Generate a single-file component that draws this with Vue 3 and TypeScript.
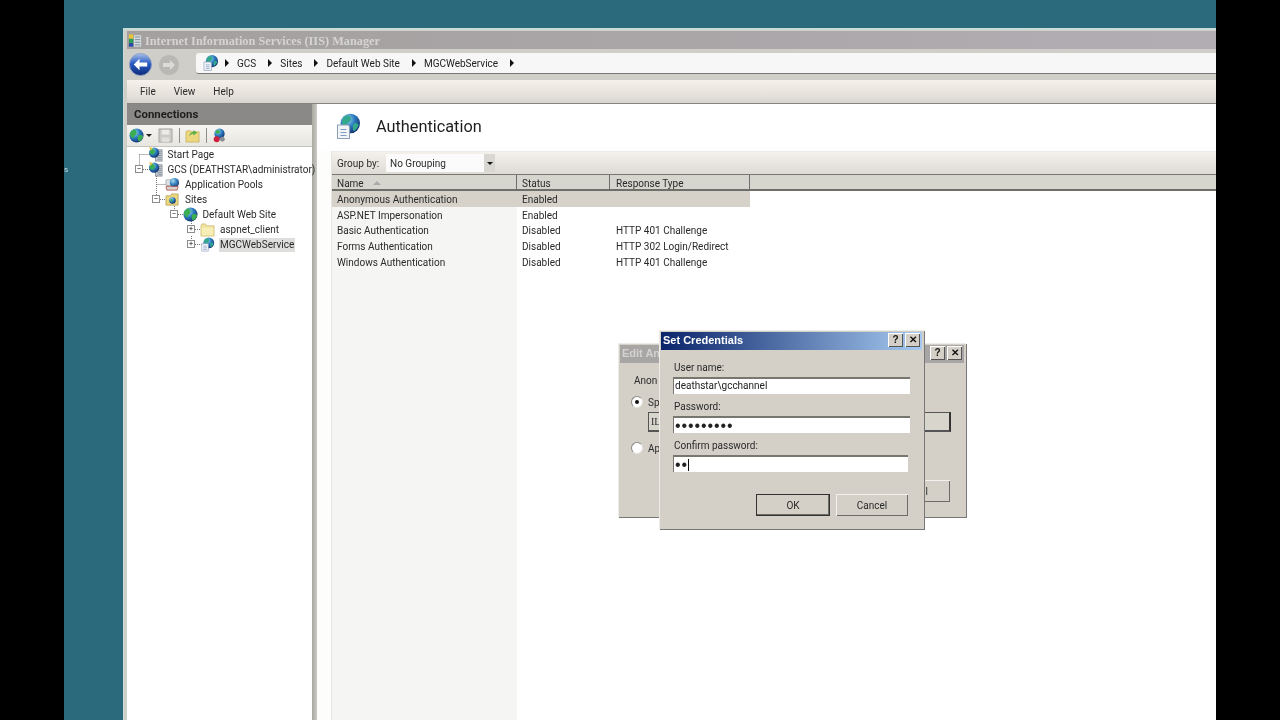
<script setup lang="ts">
interface TreeRow {
  label: string
  level: number
  icon: string
  selected?: boolean
}

const crumbs = ['GCS', 'Sites', 'Default Web Site', 'MGCWebService']

const treeRows: TreeRow[] = [
  { label: 'Start Page', level: 0, icon: 'start' },
  { label: 'GCS (DEATHSTAR\\administrator)', level: 0, icon: 'start' },
  { label: 'Application Pools', level: 1, icon: 'pools' },
  { label: 'Sites', level: 1, icon: 'sites' },
  { label: 'Default Web Site', level: 2, icon: 'globe' },
  { label: 'aspnet_client', level: 3, icon: 'folder' },
  { label: 'MGCWebService', level: 3, icon: 'app', selected: true },
]

// expander boxes of the tree, x/y inside the tree overlay
const expanders = [
  { x: 12, y: 22, plus: false },
  { x: 29, y: 52, plus: false },
  { x: 47, y: 67, plus: false },
  { x: 64, y: 82, plus: true },
  { x: 64, y: 97, plus: true },
]

const authRows = [
  { name: 'Anonymous Authentication', status: 'Enabled', type: '', selected: true },
  { name: 'ASP.NET Impersonation', status: 'Enabled', type: '' },
  { name: 'Basic Authentication', status: 'Disabled', type: 'HTTP 401 Challenge' },
  { name: 'Forms Authentication', status: 'Disabled', type: 'HTTP 302 Login/Redirect' },
  { name: 'Windows Authentication', status: 'Disabled', type: 'HTTP 401 Challenge' },
]
</script>

<template>
  <div class="screen">
    <svg width="0" height="0" class="defs">
      <defs>
        <radialGradient id="gBlue" cx="35%" cy="30%" r="75%">
          <stop offset="0" stop-color="#a6e0f0" />
          <stop offset="0.5" stop-color="#2b7cc0" />
          <stop offset="1" stop-color="#12306e" />
        </radialGradient>
        <linearGradient id="gBack" x1="0" y1="0" x2="0" y2="1">
          <stop offset="0" stop-color="#a9c0ea" />
          <stop offset="0.45" stop-color="#2b5cc4" />
          <stop offset="1" stop-color="#0c2a78" />
        </linearGradient>
        <symbol id="globe" viewBox="0 0 16 16">
          <circle cx="8" cy="8" r="7.5" fill="url(#gBlue)" />
          <path d="M4 2c2-1 4 0 4 3S6 7 5 10 1 8 1 6s2-3 3-4zM10 8c2-1 5 0 5 1s-2 5-4 5-2-5-1-6z" fill="#3cae52" />
        </symbol>
        <symbol id="page-globe" viewBox="0 0 16 18">
          <circle cx="9.5" cy="7" r="6.5" fill="url(#gBlue)" />
          <path d="M6 2c2-1 4 0 4 2s-2 2-3 4-3 0-3-2 1-3 2-4zM12 7c1-1 3 0 3 1s-2 4-3 4-1-4 0-5z" fill="#34a88c" />
          <path d="M1 8h7l1 1v8H1z" fill="#f2f4f8" stroke="#8ea0b8" stroke-width=".7" />
          <path d="M3 11h4M3 13h4M3 15h4" stroke="#7f9cc4" stroke-width=".8" />
        </symbol>
        <symbol id="start" viewBox="0 0 16 16">
          <rect x="8" y="3" width="7" height="12" fill="#c8ccd4" stroke="#6d7480" stroke-width=".7" />
          <path d="M10 5h4M10 7h4M10 9h4M10 11h4M10 13h4" stroke="#70808f" stroke-width=".8" />
          <circle cx="6.5" cy="6" r="5.5" fill="url(#gBlue)" />
          <path d="M4 2c2 0 4 1 3 4s-4 2-5 1 1-5 2-5z" fill="#3cae52" />
          <path d="M1 0l4 1-2 3z" fill="#e8c43c" />
        </symbol>
        <symbol id="pools" viewBox="0 0 16 16">
          <rect x="1" y="3" width="13" height="6" rx="1" fill="#dfe3e6" stroke="#8f969c" stroke-width=".7" />
          <circle cx="10" cy="6" r="5" fill="url(#gBlue)" opacity=".9" />
          <path d="M1 10h13l-1 4H2z" fill="#d8d3cb" stroke="#a33" stroke-width=".7" />
        </symbol>
        <symbol id="sites" viewBox="0 0 16 16">
          <path d="M1 4h5l1-2h7v12H1z" fill="#ecd77e" stroke="#a99546" stroke-width=".7" />
          <circle cx="8" cy="9" r="3.5" fill="url(#gBlue)" />
          <path d="M6 8c1-1 2 0 2 1s-1 2-2 1z" fill="#3cae52" />
        </symbol>
        <symbol id="folder" viewBox="0 0 16 16">
          <path d="M1 4l1-2h4l1 2h8v11H1z" fill="#f1e39f" stroke="#c8b467" stroke-width=".7" />
          <path d="M2 6h12v8H2z" fill="#f7eeb8" />
        </symbol>
        <symbol id="save" viewBox="0 0 16 16">
          <path d="M1 1h14v14H1z" fill="#cdcbc8" stroke="#a8a6a3" />
          <path d="M4 2h8v5H4z" fill="#ecebe8" />
          <path d="M4 10h8v5H4z" fill="#e0dfdc" />
        </symbol>
        <symbol id="up" viewBox="0 0 16 16">
          <path d="M1 4l1-1h4l1 1h8v11H1z" fill="#ecd77e" stroke="#bfa956" stroke-width=".7" />
          <path d="M4 9c1-3 3-5 5-5V2l4 3-4 3V6c-2 0-3 1-5 3z" fill="#5db046" />
        </symbol>
        <symbol id="connect" viewBox="0 0 16 16">
          <circle cx="8" cy="6" r="5.5" fill="url(#gBlue)" />
          <path d="M6 2c2 0 3 1 2 3S5 6 4 5s1-3 2-3z" fill="#3cae52" />
          <circle cx="5" cy="12" r="3.2" fill="#cc2440" />
          <circle cx="11" cy="12" r="2.6" fill="#8a8f96" />
        </symbol>
      </defs>
    </svg>

    <div class="desktop">
      <span class="speck">s</span>

      <div class="window">
        <div class="titlebar">
          <svg class="title-icon" viewBox="0 0 16 16">
            <path d="M1 1h5v5H1z" fill="#e8c43c" />
            <path d="M1 6h5v5H1z" fill="#2c9c5a" />
            <path d="M1 11h5v4H1z" fill="#2748a8" />
            <path d="M7 2h8v13H7z" fill="#d8dde2" />
            <path d="M8 4h6M8 7h6M8 10h6M8 13h6" stroke="#70808f" />
          </svg>
          <span>Internet Information Services (IIS) Manager</span>
        </div>

        <div class="addressrow">
          <div class="nav-buttons">
            <svg class="nav-back" viewBox="0 0 24 24">
              <circle cx="12" cy="12" r="11.5" fill="url(#gBack)" stroke="#8f9fc4" />
              <path d="M5 12l6-6v4h8v4h-8v4z" fill="#fff" />
            </svg>
            <svg class="nav-forward" viewBox="0 0 22 22">
              <circle cx="11" cy="11" r="10.5" fill="#b9b8b4" stroke="#cfcec9" />
              <path d="M17 11l-5-5v3H5v4h7v3z" fill="#dcdbd7" />
            </svg>
          </div>
          <div class="addressbox">
            <svg class="addr-icon"><use href="#page-globe" /></svg>
            <i class="crumb-arrow"></i>
            <template v-for="c in crumbs" :key="c">
              <span class="crumb">{{ c }}</span>
              <i class="crumb-arrow"></i>
            </template>
          </div>
        </div>

        <div class="menubar">
          <span>File</span>
          <span>View</span>
          <span>Help</span>
        </div>

        <div class="workspace">
          <aside class="connections">
            <div class="conn-head">Connections</div>
            <div class="conn-tools">
              <svg class="ti"><use href="#globe" /></svg>
              <i class="tool-drop"></i>
              <svg class="ti save"><use href="#save" /></svg>
              <i class="tool-sep"></i>
              <svg class="ti"><use href="#up" /></svg>
              <i class="tool-sep"></i>
              <svg class="ti"><use href="#connect" /></svg>
            </div>
            <div class="tree">
              <svg class="tree-lines" width="186" height="130">
                <path
                  d="M12.5 9.5v11M12.5 9.5h11M16 24.5h7M29.5 31v19M29.5 39.5h11M33 54.5h7M47.5 61v4M51 69.5h7M64.5 76v4M68 84.5h7M64.5 91v4M68 99.5h7"
                  stroke="#777"
                  stroke-dasharray="1 1"
                  fill="none"
                />
              </svg>
              <span
                v-for="e in expanders"
                :key="e.y"
                class="expander"
                :style="{ left: e.x - 4 + 'px', top: e.y - 4 + 'px' }"
              >{{ e.plus ? '+' : '−' }}</span>
              <div v-for="r in treeRows" :key="r.label" class="tree-row" :style="{ paddingLeft: r.level * 17.5 + 20.5 + 'px' }">
                <svg class="tree-icon"><use :href="r.icon === 'app' ? '#page-globe' : '#' + r.icon" /></svg>
                <span class="tree-label" :class="{ selected: r.selected }">{{ r.label }}</span>
              </div>
            </div>
          </aside>

          <div class="splitter"></div>

          <main class="content">
            <div class="content-head">
              <svg class="head-icon"><use href="#page-globe" /></svg>
              <h1>Authentication</h1>
            </div>
            <div class="content-body">
              <div class="groupbar">
                <span class="group-label">Group by:</span>
                <div class="combo">
                  <span>No Grouping</span>
                  <i class="combo-btn"></i>
                </div>
              </div>
              <div class="columns">
                <div class="col col-name">Name <i class="sort-arrow"></i></div>
                <div class="col col-status">Status</div>
                <div class="col col-type">Response Type</div>
              </div>
              <div class="list">
                <div class="name-tint"></div>
                <div v-for="a in authRows" :key="a.name" class="list-row" :class="{ selected: a.selected }">
                  <span class="col-name">{{ a.name }}</span>
                  <span class="col-status">{{ a.status }}</span>
                  <span class="col-type">{{ a.type }}</span>
                </div>
              </div>
            </div>
          </main>
        </div>
      </div>

      <!-- only the parts of this dialog that stick out from under Set Credentials carry text -->
      <div class="dialog dialog-back">
        <div class="dlg-title back-title">
          <span>Edit An</span>
          <div class="dlg-btns">
            <b>?</b>
            <b>✕</b>
          </div>
        </div>
        <div class="back-body">
          <p class="anon">Anon</p>
          <label class="radio-line"><i class="radio on"></i>Sp</label>
          <div class="back-field">
            <span class="iusr">IL</span>
          </div>
          <label class="radio-line second"><i class="radio"></i>Ap</label>
          <div class="back-actions"><span class="win-btn back-cancel">l</span></div>
        </div>
      </div>

      <div class="dialog dialog-front">
        <div class="dlg-title front-title">
          <span>Set Credentials</span>
          <div class="dlg-btns">
            <b>?</b>
            <b>✕</b>
          </div>
        </div>
        <div class="front-body">
          <label>User name:</label>
          <div class="field">deathstar\gcchannel</div>
          <label>Password:</label>
          <div class="field dots">•••••••••</div>
          <label>Confirm password:</label>
          <div class="field dots short">••<i class="caret"></i></div>
          <div class="front-actions">
            <span class="win-btn default">OK</span>
            <span class="win-btn">Cancel</span>
          </div>
        </div>
      </div>
    </div>
  </div>
</template>

<style>
html,
body {
  margin: 0;
  background: #000;
}
</style>

<style scoped>
.screen {
  width: 1280px;
  height: 720px;
  background: #000;
  display: flex;
  justify-content: center;
  overflow: hidden;
  font-family: Roboto, "Liberation Sans", Arial, sans-serif;
  font-size: 10px;
  color: #2a2a2a;
}
.defs {
  position: absolute;
}
.desktop {
  position: relative;
  width: 1152px;
  height: 720px;
  background: #2b6a7c;
  overflow: hidden;
  filter: blur(0.35px);
}
.speck {
  position: absolute;
  left: 0;
  top: 165px;
  font-size: 8px;
  color: #c8dce0;
}

/* main window, runs off the right and bottom of the desktop */
.window {
  position: absolute;
  left: 59px;
  top: 28px;
  width: 1110px;
  height: 720px;
  box-sizing: border-box;
  border-top: 2px solid #c9dcd8;
  border-left: 1px solid #c9dcd8;
  background: #cfcec9;
  display: flex;
  flex-direction: column;
}
.titlebar {
  height: 18px;
  margin: 1px 0 0 3px;
  background: linear-gradient(90deg, #a3a09f, #aaa6a8 50%, #b2aeb4);
  display: flex;
  align-items: center;
  gap: 3px;
  padding: 2px 0 0 1px;
  box-sizing: border-box;
  font-family: "Liberation Serif", serif;
  font-weight: 700;
  font-size: 12.3px;
  color: #d6d4d2;
}
.title-icon {
  width: 14px;
  height: 15px;
  flex: none;
  margin-top: -2px;
}
.addressrow {
  height: 26px;
  padding-left: 3px;
  display: flex;
  align-items: flex-start;
  background: #cfcec9;
}
.nav-buttons {
  display: flex;
  align-items: center;
  gap: 6px;
  width: 67px;
  flex: none;
  padding: 4px 0 0 2px;
}
.nav-back {
  width: 23px;
  height: 23px;
}
.nav-forward {
  width: 22px;
  height: 22px;
}
.addressbox {
  flex: 1;
  height: 21px;
  margin-top: 4px;
  box-sizing: border-box;
  background: #f8f7f7;
  border-bottom: 1px solid #777;
  border-radius: 3px 0 0 3px;
  display: flex;
  align-items: center;
  padding-left: 7px;
  color: #222;
}
.addr-icon {
  width: 15px;
  height: 18px;
  margin-right: 7px;
}
.crumb {
  margin: 0 12px 0 8px;
}
.crumb-arrow {
  width: 0;
  height: 0;
  border-left: 4px solid #111;
  border-top: 4px solid transparent;
  border-bottom: 4px solid transparent;
}
.menubar {
  height: 24px;
  margin: 5px 0 0 3px;
  background: linear-gradient(180deg, #f6f1ea, #e4e0da 70%, #d6d3cd);
  border-bottom: 1px solid #85857f;
  display: flex;
  align-items: center;
  gap: 18px;
  padding-left: 13px;
  box-sizing: border-box;
}
.workspace {
  flex: 1;
  display: flex;
  margin-left: 3px;
  background: #fff;
  min-height: 0;
}
.connections {
  width: 185px;
  flex: none;
  display: flex;
  flex-direction: column;
  background: #fff;
}
.conn-head {
  height: 21px;
  background: #8b8987;
  font-weight: 700;
  font-size: 11.4px;
  color: #1d1d1d;
  line-height: 21px;
  padding-left: 7px;
}
.conn-tools {
  height: 21px;
  background: linear-gradient(180deg, #f7f5f1, #e8e6e1);
  border-bottom: 1px solid #c4c3be;
  display: flex;
  align-items: center;
  padding-left: 2px;
}
.ti {
  width: 15px;
  height: 15px;
  flex: none;
}
.tool-drop {
  width: 0;
  height: 0;
  margin: 0 6px 0 2px;
  border-top: 3px solid #222;
  border-left: 3px solid transparent;
  border-right: 3px solid transparent;
}
.tool-sep {
  width: 1px;
  height: 15px;
  margin: 0 5px 0 6px;
  background: #8d8d8d;
}
.tree {
  position: relative;
  flex: 1;
}
.tree-lines {
  position: absolute;
  left: 0;
  top: -2px;
}
.expander {
  position: absolute;
  width: 8px;
  height: 8px;
  box-sizing: border-box;
  border: 1px solid #8c8c8c;
  background: #fff;
  font-size: 8px;
  line-height: 6px;
  text-align: center;
  color: #222;
}
.tree-row {
  position: relative;
  height: 15px;
  display: flex;
  align-items: center;
  gap: 4px;
  white-space: nowrap;
}
.tree-icon {
  width: 15px;
  height: 15px;
  flex: none;
}
.tree-label {
  padding: 0 1px;
  line-height: 14px;
}
.tree-label.selected {
  background: #dededc;
}
.splitter {
  width: 5px;
  flex: none;
  background: linear-gradient(90deg, #a8a8a0, #cbcbc4);
}
.content {
  flex: 1;
  display: flex;
  flex-direction: column;
  background: #fdfdfc;
  min-width: 0;
}
.content-head {
  height: 47px;
  display: flex;
  align-items: center;
  gap: 16px;
  padding: 0 0 2px 19px;
  background: #fff;
  box-sizing: border-box;
}
.head-icon {
  width: 24px;
  height: 27px;
}
h1 {
  margin: 0;
  font-size: 16.3px;
  font-weight: 400;
  color: #1e1e1e;
}
.content-body {
  flex: 1;
  margin-left: 14px;
  border-left: 1px solid #e6e6e3;
  display: flex;
  flex-direction: column;
  min-height: 0;
}
.groupbar {
  height: 24px;
  box-sizing: border-box;
  background: linear-gradient(180deg, #f4f1ec, #dedbd5);
  border-top: 1px solid #ecebe8;
  border-bottom: 1px solid #77776f;
  display: flex;
  align-items: center;
  padding-left: 5px;
}
.group-label {
  width: 49px;
  flex: none;
}
.combo {
  width: 109px;
  height: 18px;
  background: #fbfbfb;
  display: flex;
  align-items: center;
  justify-content: space-between;
  padding-left: 4px;
  box-sizing: border-box;
}
.combo-btn {
  width: 11px;
  height: 18px;
  background: #d9d7d1;
  display: flex;
  align-items: center;
  justify-content: center;
}
.combo-btn::after {
  content: "";
  border-top: 3px solid #111;
  border-left: 3px solid transparent;
  border-right: 3px solid transparent;
}
.columns {
  height: 16px;
  box-sizing: border-box;
  background: #d6d5ce;
  border-bottom: 2px solid #6f6f6a;
  display: flex;
  align-items: center;
}
.col {
  height: 100%;
  padding-top: 2px;
  display: flex;
  align-items: center;
  border-right: 1px solid #6f6f6a;
  box-sizing: border-box;
}
.col-name {
  width: 185px;
  padding-left: 5px;
  box-sizing: border-box;
  flex: none;
}
.col-status {
  width: 93px;
  padding-left: 5px;
  box-sizing: border-box;
  flex: none;
}
.col-type {
  width: 140px;
  padding-left: 6px;
  box-sizing: border-box;
  flex: none;
}
.sort-arrow {
  margin-left: 9px;
  border-bottom: 4px solid #aaa;
  border-left: 4px solid transparent;
  border-right: 4px solid transparent;
}
.list {
  position: relative;
  flex: 1;
  background: #fff;
}
.name-tint {
  position: absolute;
  left: 0;
  top: 0;
  bottom: 0;
  width: 185px;
  background: #f5f5f3;
}
.list-row {
  position: relative;
  width: 418px;
  height: 15.8px;
  padding-top: 1px;
  box-sizing: border-box;
  display: flex;
  align-items: center;
}
.list-row.selected {
  background: #d6d2ca;
}

/* dialogs sit over the window */
.dialog {
  position: absolute;
  box-sizing: border-box;
  background: #d4d0c8;
  box-shadow: 1px 1px 0 #777, inset 1px 1px 0 #eeece7;
  display: flex;
  flex-direction: column;
  padding: 2px;
}
.dialog-back {
  left: 554px;
  top: 343px;
  width: 348px;
  height: 174px;
}
.dialog-front {
  left: 595px;
  top: 330px;
  width: 265px;
  height: 199px;
}
.dlg-title {
  height: 18px;
  flex: none;
  display: flex;
  align-items: center;
  justify-content: space-between;
  padding: 0 2px 2px 2px;
  box-sizing: border-box;
  font-family: "Liberation Sans", Arial, sans-serif;
  font-weight: 700;
  font-size: 11px;
}
.front-title {
  background: linear-gradient(90deg, #0a246a, #a6caf0);
  color: #fff;
}
.back-title {
  background: #a8a6a4;
  color: #d4d2d0;
}
.dlg-btns {
  display: flex;
  gap: 2px;
}
.dlg-btns b {
  width: 15px;
  height: 14px;
  background: #d4d0c8;
  box-shadow: inset 1px 1px 0 #fff, inset -1px -1px 0 #555;
  color: #111;
  font-size: 10px;
  line-height: 14px;
  text-align: center;
}
.back-body {
  flex: 1;
  padding: 11px 14px 0 14px;
  display: flex;
  flex-direction: column;
}
.anon {
  margin: 0 0 7px;
  line-height: 14px;
  white-space: nowrap;
}
.radio-line {
  display: flex;
  align-items: center;
  gap: 5px;
  height: 14px;
  white-space: nowrap;
  margin-left: -3px;
}
.radio-line.second {
  margin-top: 9px;
}
.radio {
  width: 10px;
  height: 10px;
  border-radius: 50%;
  background: #fff;
  border: 1px solid #8a8a86;
  border-right-color: #e4e2dc;
  border-bottom-color: #e4e2dc;
  display: flex;
  align-items: center;
  justify-content: center;
}
.radio.on::after {
  content: "";
  width: 4px;
  height: 4px;
  border-radius: 50%;
  background: #111;
}
.back-field {
  height: 20px;
  margin: 3px 0 0 14px;
  display: flex;
  box-sizing: border-box;
  border: 1px solid #555;
  border-right-color: #333;
  border-bottom-width: 2px;
  border-right-width: 2px;
  background: #d8d5cd;
  align-items: center;
  padding-left: 2px;
  width: 303px;
}
.iusr {
  font-family: "Liberation Serif", serif;
}
.back-actions {
  margin-top: 25px;
  display: flex;
  justify-content: flex-end;
}
.back-cancel.win-btn {
  justify-content: flex-end;
  padding-right: 22px;
}
.front-body {
  flex: 1;
  padding: 11px 12px 0 12px;
  display: flex;
  flex-direction: column;
}
.front-body label {
  height: 13px;
  line-height: 13px;
  margin-bottom: 3px;
  padding-left: 1px;
}
.field {
  width: 237px;
  height: 17px;
  box-sizing: border-box;
  background: #fff;
  border-top: 2px solid #77776f;
  border-left: 1px solid #77776f;
  line-height: 14px;
  padding-left: 1px;
  margin-bottom: 6px;
  color: #222;
}
.field.dots {
  font-family: "Liberation Sans", Arial, sans-serif;
  font-size: 16px;
  letter-spacing: 0.9px;
  display: flex;
  align-items: center;
}
.field.short {
  width: 235px;
}
.caret {
  width: 1px;
  height: 12px;
  background: #111;
}
.front-actions {
  display: flex;
  justify-content: flex-end;
  gap: 6px;
  margin-top: 16px;
  padding-right: 2px;
}
.win-btn {
  width: 72px;
  height: 22px;
  box-sizing: border-box;
  display: flex;
  align-items: center;
  justify-content: center;
  background: #d4d0c8;
  box-shadow: inset 1px 1px 0 #f4f2ee, inset -1px -1px 0 #6c6c66;
}
.win-btn.default {
  border: 1px solid #333;
  box-shadow: inset -1px -1px 0 #6c6c66;
  width: 74px;
}
</style>
